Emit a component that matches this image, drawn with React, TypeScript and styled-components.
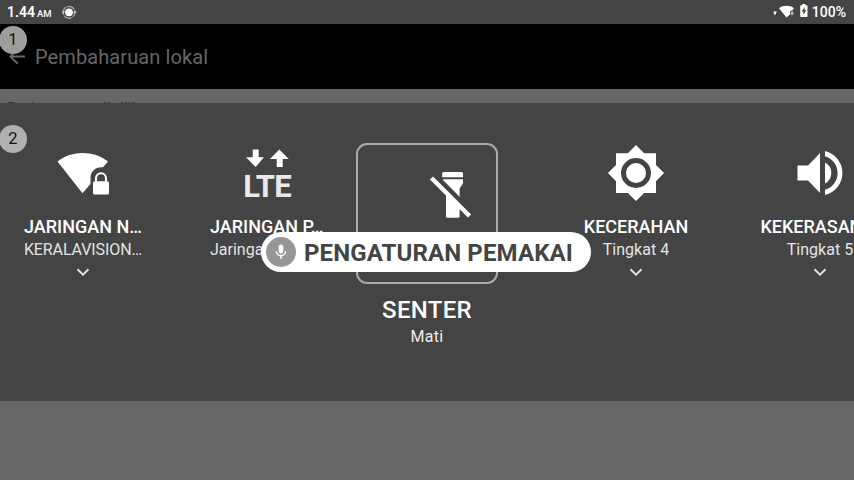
import React from 'react';
import styled, { createGlobalStyle } from 'styled-components';

const GlobalStyle = createGlobalStyle`
  * { box-sizing: border-box; }
  body { margin: 0; font-family: Roboto, sans-serif; background: #666; }
`;

const Screen = styled.div`
  position: relative;
  width: 854px;
  height: 480px;
  overflow: hidden;
  background: #666;
`;

const StatusBar = styled.header`
  display: flex;
  align-items: center;
  justify-content: space-between;
  height: 24px;
  padding: 0 8px 0 7px;
  background: #444;
  color: #fff;
`;

const StatusGroup = styled.div`
  display: flex;
  align-items: center;
  height: 24px;
`;

const Clock = styled.span`
  font-size: 14px;
  font-weight: 600;
  line-height: 24px;
  padding-top: 1px;
  margin-right: 9px;
  white-space: pre;
  small { font-size: 9.5px; font-weight: 500; letter-spacing: 0; margin-left: 2px; }
`;

const Battery = styled.span`
  font-size: 14px;
  font-weight: 500;
  line-height: 24px;
  margin-left: 3px;
`;

const AppBar = styled.div`
  display: flex;
  align-items: center;
  height: 65px;
  padding-left: 5px;
  background: #000;
  color: #666;
`;

const AppTitle = styled.h1`
  margin: 0 0 0 6px;
  font-size: 20px;
  font-weight: 400;
  line-height: 24px;
  letter-spacing: 0.1px;
`;

const ListHint = styled.div`
  height: 14px;
  padding: 10px 0 0 7px;
  overflow: hidden;
  font-size: 16px;
  line-height: 19px;
  color: #333;
`;

const Panel = styled.main`
  display: flex;
  align-items: flex-start;
  height: 298px;
  padding: 40px 0 0 24px;
  background: #444;
  color: #fff;
`;

const Tile = styled.section<{ $before?: number }>`
  display: flex;
  flex: none;
  flex-direction: column;
  align-items: center;
  width: 118px;
  margin-left: ${(p) => p.$before ?? 0}px;
`;

const TileIcon = styled.div`
  display: flex;
  align-items: center;
  justify-content: center;
  height: 60px;
  margin-bottom: 12px;
`;

const TileTitle = styled.h2`
  margin: 0;
  font-size: 18px;
  font-weight: 500;
  line-height: 24px;
  white-space: nowrap;
`;

const TileValue = styled.p<{ $spacing?: number }>`
  margin: 0;
  font-size: 16px;
  line-height: 21px;
  letter-spacing: ${(p) => p.$spacing ?? 0}px;
  color: #e3e3e3;
  white-space: nowrap;
`;

const StartAligned = styled.div`
  width: 100%;
  padding-left: 2px;
`;

const Selected = styled(Tile)`
  width: 142px;
`;

const Frame = styled.div`
  display: flex;
  width: 142px;
  height: 141px;
  padding: 26px 0 0 71px;
  border: 2px solid #aaa;
  border-radius: 11px;
`;

const SelectedTitle = styled.h2`
  margin: 12px 0 0;
  font-size: 24px;
  font-weight: 500;
  line-height: 28px;
  letter-spacing: 0.3px;
`;

const SelectedValue = styled.p`
  margin: 3px 0 0;
  font-size: 16px;
  line-height: 20px;
  letter-spacing: 0.3px;
  color: #eee;
`;

const Badge = styled.span<{ $top: number; $tone: string }>`
  position: absolute;
  top: ${(p) => p.$top}px;
  left: -1px;
  width: 28px;
  height: 28px;
  border-radius: 50%;
  background: ${(p) => p.$tone};
  color: #111;
  font-size: 16.5px;
  line-height: 27px;
  text-align: center;
`;

const VoiceChip = styled.div`
  position: absolute;
  top: 232px;
  left: 261px;
  display: flex;
  align-items: center;
  width: 330px;
  height: 40px;
  padding-left: 5px;
  border-radius: 20px;
  background: #fff;
  color: #444;
`;

const MicDisc = styled.span`
  display: flex;
  align-items: center;
  justify-content: center;
  width: 30px;
  height: 30px;
  border-radius: 50%;
  background: #969696;
`;

const ChipLabel = styled.span`
  margin-left: 8px;
  padding-top: 2px;
  font-size: 24px;
  font-weight: 700;
  line-height: 38px;
  letter-spacing: 0.12px;
  white-space: nowrap;
`;

const ChevronSvg = styled.svg`
  display: block;
  margin-top: 8px;
`;

const Chevron = () => (
  <ChevronSvg width="14" height="10" viewBox="0 0 14 10">
    <path d="M1.5 1.2 7 6.700l5.500-5.500" fill="none" stroke="#e3e3e3" strokeWidth="2" />
  </ChevronSvg>
);

const SyncIcon = () => (
  <svg width="16" height="16" viewBox="0 0 16 16">
    <circle cx="8" cy="8.300" r="3.900" fill="#fff" />
    <circle cx="8" cy="8.300" r="5.900" fill="none" stroke="#aaa" strokeWidth="1.400" strokeDasharray="8.300 1" strokeDashoffset="3" />
    <path d="M.5 7.600h3.600L2.300 10zM15.700 9h-3.600l1.800-2.400z" fill="#ccc" />
  </svg>
);

const StatusIcons = () => (
  <svg width="36" height="24" viewBox="773 0 36 24">
    <path d="M773.200 11.500h3.600L775 15.500z" fill="#fff" />
    <path d="M779 8.200c4.500-3.200 10.600-3.200 15 0L792.500 10.300l-2.500 1v3.200L786.500 17.500z" fill="#fff" />
    <path d="M790.800 15v-2.500l1.300-1.500 1.300 1.500V15z" fill="#bbb" />
    <path d="M801 5.300h1.300V4h3v1.300h1.400q.8 0 .8.800v10.100q0 .8-.8.800H801q-.8 0-.8-.8V6.100q0-.8.800-.8z" fill="#fff" />
    <path d="m804.700 7-3 4.600h1.700v3.200l3-4.600h-1.700z" fill="#444" />
  </svg>
);

const BackIcon = () => (
  <svg width="24" height="24" viewBox="0 0 24 24">
    <path d="M20 10.500H7.830l5.590-5.590L12 3.500l-8 8 8 8 1.410-1.410L7.830 12.500H20z" fill="#666" />
  </svg>
);

const WifiLockIcon = () => (
  <svg width="52" height="60" viewBox="57 143 52 60">
    <path d="M57.500 161.500C72 150.300 93.500 150.300 108 161.500L103 167.200C95.300 166.500 90.500 171.500 90.500 178v6L82.500 193.300z" fill="#fff" />
    <path d="M96 181.500v-3.300a5 5 0 0 1 10 0v3.300" fill="none" stroke="#fff" strokeWidth="2.100" />
    <rect x="93" y="181.300" width="16" height="13.200" rx="1.600" fill="#fff" />
  </svg>
);

const LteStack = styled.div`
  display: flex;
  flex-direction: column;
  align-items: center;
  height: 60px;
  padding-top: 6px;
`;

const LteLabel = styled.span`
  margin-top: 2px;
  font-size: 31px;
  font-weight: 700;
  line-height: 33px;
  letter-spacing: -0.8px;
  color: #eaeaea;
`;

const LteIcon = () => (
  <LteStack>
    <svg width="44" height="19" viewBox="0 0 44 19">
      <path d="M7.700.4h6v7.800h5.200L10.700 18 1 8.200h6.700zM31.700 18h6v-8h6L34.300.4 25 10h6.700z" fill="#fff" />
    </svg>
    <LteLabel>LTE</LteLabel>
  </LteStack>
);

const TorchOffIcon = () => (
  <svg width="44" height="48" viewBox="429 171 44 48">
    <path d="M442.200 173.500q0-1.500 1.500-1.500h17.800q1.500 0 1.500 1.500v3.700h-20.800zM443 179.200h20v4.300l-3.400 5v8.200L443 180.100z" fill="#fff" />
    <path d="M446 190.500l13.600 13.600v12.100q0 1.500-1.500 1.500H447.500q-1.500 0-1.500-1.500z" fill="#fff" />
    <path d="M431.500 178 469.500 216" fill="none" stroke="#fff" strokeWidth="4.400" />
  </svg>
);

const BrightnessIcon = () => (
  <svg width="56" height="56" viewBox="0 0 56 56">
    <path d="M28 0l8.200 8.200H48v11.700L56 28l-8 8.200V48H36.200L28 56l-8.200-8H8V36.200L0 28l8-8.100V8.200h11.800z" fill="#fff" />
    <circle cx="28" cy="28" r="12.500" fill="#fff" stroke="#444" strokeWidth="5" />
  </svg>
);

const VolumeIcon = () => (
  <svg width="46" height="60" viewBox="797 143 46 60">
    <path d="M797.500 165.500h10.500l12-12.500v40l-12-12.500h-10.500zM825 162.500a11.900 11.900 0 0 1 0 21z" fill="#fff" />
    <path d="M825 151a22.600 22.600 0 0 1 0 44v-5.200a17.500 17.500 0 0 0 0-33.600z" fill="#fff" />
  </svg>
);

const MicIcon = () => (
  <svg width="18" height="18" viewBox="0 0 24 24">
    <path d="M12 14c1.660 0 3-1.340 3-3V5c0-1.660-1.340-3-3-3S9 3.340 9 5v6c0 1.660 1.340 3 3 3zm5.300-3c0 3-2.540 5.100-5.300 5.100S6.700 14 6.700 11H5c0 3.410 2.720 6.230 6 6.720V21h2v-3.280c3.280-.48 6-3.300 6-6.720z" fill="#fff" />
  </svg>
);

export default function App() {
  return (
    <>
      <GlobalStyle />
      <Screen>
        <StatusBar>
          <StatusGroup>
            <Clock>1.44<small>AM</small></Clock>
            <SyncIcon />
          </StatusGroup>
          <StatusGroup>
            <StatusIcons />
            <Battery>100%</Battery>
          </StatusGroup>
        </StatusBar>
        <AppBar>
          <BackIcon />
          <AppTitle>Pembaharuan lokal</AppTitle>
        </AppBar>
        <ListHint>Berkas yang dipilih</ListHint>
        <Panel>
          <Tile>
            <TileIcon><WifiLockIcon /></TileIcon>
            <TileTitle>JARINGAN N…</TileTitle>
            <TileValue $spacing={-0.1}>KERALAVISION…</TileValue>
            <Chevron />
          </Tile>
          <Tile $before={66}>
            <TileIcon><LteIcon /></TileIcon>
            <StartAligned>
              <TileTitle>JARINGAN P…</TileTitle>
              <TileValue>Jaringan</TileValue>
            </StartAligned>
          </Tile>
          <Selected $before={30}>
            <Frame><TorchOffIcon /></Frame>
            <SelectedTitle>SENTER</SelectedTitle>
            <SelectedValue>Mati</SelectedValue>
          </Selected>
          <Tile $before={79}>
            <TileIcon><BrightnessIcon /></TileIcon>
            <TileTitle>KECERAHAN</TileTitle>
            <TileValue $spacing={0.05}>Tingkat 4</TileValue>
            <Chevron />
          </Tile>
          <Tile $before={66}>
            <TileIcon><VolumeIcon /></TileIcon>
            <TileTitle>KEKERASAN …</TileTitle>
            <TileValue $spacing={0.05}>Tingkat 5</TileValue>
            <Chevron />
          </Tile>
        </Panel>
        <Badge $top={26} $tone="#9d9d9d">1</Badge>
        <Badge $top={125} $tone="#b0b0b0">2</Badge>
        <VoiceChip>
          <MicDisc><MicIcon /></MicDisc>
          <ChipLabel>PENGATURAN PEMAKAI</ChipLabel>
        </VoiceChip>
      </Screen>
    </>
  );
}
